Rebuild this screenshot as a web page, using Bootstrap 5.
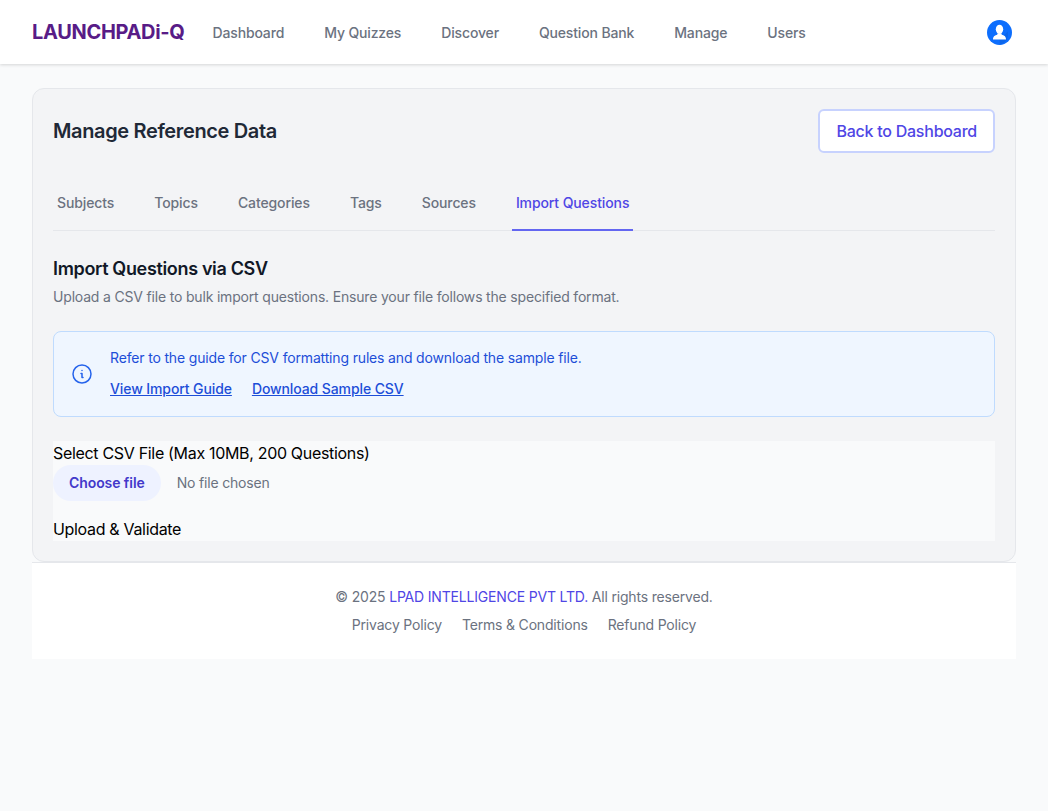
<!DOCTYPE html>
<html lang="en">
<head>
    <meta charset="UTF-8">
    <meta name="viewport" content="width=device-width, initial-scale=1.0">
    <title>Manage Reference Data</title>
    <link href="https://cdn.jsdelivr.net/npm/bootstrap@5.3.0/dist/css/bootstrap.min.css" rel="stylesheet">
    <style>
        body { font-family: Inter, "Liberation Sans", sans-serif; background: #f9fafb; color: #000; font-size: 16px; line-height: 24px; letter-spacing: -0.32px; }
        .top-bar { height: 64px; background: #fff; box-shadow: 0 1px 3px rgba(0,0,0,.15); padding: 0 32px; }
        .brand { font-size: 20px; font-weight: 700; color: #581c87; line-height: 28px; text-decoration: none; margin-right: 28px; letter-spacing: -0.33px; }
        .top-link { font-size: 14px; font-weight: 500; color: #6b7280; text-decoration: none; line-height: 20px; letter-spacing: -0.15px; }
        .top-links { gap: 40px; margin-top: 2px; }
        .page { padding: 24px 32px 0; }
        .panel { background: #f3f4f6; border: 1px solid #e5e7eb; border-radius: 12px; padding: 20px; height: 474px; }
        .panel-title { font-size: 20px; font-weight: 600; color: #1f2937; line-height: 28px; margin: 0; letter-spacing: -0.36px; }
        .back-btn { border: 2px solid #c7d2fe; border-radius: 6px; background: #fff; color: #4f46e5; font-size: 16px; font-weight: 500; line-height: 24px; padding: 8px 16px; text-decoration: none; height: 44px; letter-spacing: -0.24px; }
        .tabs { margin-top: 24px; border-bottom: 1px solid #e5e7eb; gap: 32px; height: 54px; }
        .tab-link { font-size: 14px; font-weight: 500; color: #6b7280; text-decoration: none; padding: 0 4px; line-height: 20px; display: flex; align-items: center; height: 54px; margin-bottom: -1px; border-bottom: 2px solid transparent; letter-spacing: -0.11px; }
        .tab-link.active { color: #4f46e5; border-bottom-color: #6366f1; }
        .import-title { font-size: 18px; font-weight: 600; color: #111827; line-height: 28px; margin: 24px 0 4px; letter-spacing: -0.34px; }
        .import-text { font-size: 14px; color: #6b7280; line-height: 20px; margin: 0 0 24px; letter-spacing: -0.18px; }
        .guide-box { background: #eff6ff; border: 1px solid #bfdbfe; border-radius: 8px; padding: 15px 18px 17px; height: 86px; gap: 18px; color: #1d4ed8; font-size: 14px; line-height: 20px; margin-bottom: 24px; letter-spacing: -0.16px; }
        .guide-box a { color: #1d4ed8; font-weight: 500; text-decoration: underline; letter-spacing: -0.1px; }
        .guide-links { gap: 20px; margin-top: 11px; }
        .guide-box svg { margin-top: 2px; }
        .upload-area { background: #f9fafb; height: 100px; }
        .file-row { margin-bottom: 16px; height: 36px; }
        .choose-btn { background: #eef2ff; color: #4338ca; border: 0; border-radius: 18px; font-size: 14px; font-weight: 600; height: 36px; padding: 0 16px; margin-right: 16px; letter-spacing: -0.08px; }
        .no-file { font-size: 14px; color: #6b7280; letter-spacing: -0.18px; }
        .page-footer { background: #fff; border-top: 1px solid #e5e7eb; height: 97px; padding-top: 24px; font-size: 14px; line-height: 20px; color: #6b7280; letter-spacing: -0.18px; }
        .page-footer a { color: #6b7280; text-decoration: none; }
        .page-footer a.lpad { color: #4f46e5; }
        .footer-links { gap: 20px; margin-top: 8px; }
    </style>
</head>
<body>
    <nav class="top-bar d-flex align-items-center justify-content-between">
        <div class="d-flex align-items-center">
            <a class="brand" href="#">LAUNCHPADi-Q</a>
            <div class="top-links d-flex">
                <a class="top-link" href="#">Dashboard</a>
                <a class="top-link" href="#">My Quizzes</a>
                <a class="top-link" href="#">Discover</a>
                <a class="top-link" href="#">Question Bank</a>
                <a class="top-link" href="#">Manage</a>
                <a class="top-link" href="#">Users</a>
            </div>
        </div>
        <svg class="me-1" width="25" height="25" viewBox="0 0 25 25" aria-label="Account">
            <circle cx="12.5" cy="12.5" r="12.5" fill="#0d6efd"/>
            <path d="M12.5 19 L21 11.5 A12 12 0 0 1 13 25 Z" fill="#0b5ed7" opacity=".5"/>
            <ellipse cx="12.5" cy="9.3" rx="3.7" ry="4.6" fill="#fff"/>
            <path d="M10.6 13.2 L14.4 13.2 L14.8 14.8 C17 15.5 19 16.2 19 19.4 L6 19.4 C6 16.2 8 15.5 10.2 14.8 Z" fill="#fff"/>
        </svg>
    </nav>

    <div class="page">
        <div class="panel">
            <div class="d-flex align-items-center justify-content-between">
                <h1 class="panel-title">Manage Reference Data</h1>
                <a class="back-btn" href="#">Back to Dashboard</a>
            </div>

            <div class="tabs d-flex">
                <a class="tab-link" href="#">Subjects</a>
                <a class="tab-link" href="#">Topics</a>
                <a class="tab-link" href="#">Categories</a>
                <a class="tab-link" href="#">Tags</a>
                <a class="tab-link" href="#">Sources</a>
                <a class="tab-link active" href="#">Import Questions</a>
            </div>

            <h2 class="import-title">Import Questions via CSV</h2>
            <p class="import-text">Upload a CSV file to bulk import questions. Ensure your file follows the specified format.</p>

            <div class="guide-box d-flex align-items-center">
                <svg width="20" height="20" viewBox="0 0 20 20" fill="none" stroke="#2563eb" stroke-width="1.5" stroke-linecap="round" stroke-linejoin="round">
                    <circle cx="10" cy="10" r="9"/>
                    <path d="M9 9.5 L10 9.5 L10 13.5 L11 13.5"/>
                    <path d="M10 6.5 L10 6.6"/>
                </svg>
                <div>
                    <div>Refer to the guide for CSV formatting rules and download the sample file.</div>
                    <div class="guide-links d-flex">
                        <a href="#">View Import Guide</a>
                        <a href="#">Download Sample CSV</a>
                    </div>
                </div>
            </div>

            <div class="upload-area">
                <div>Select CSV File (Max 10MB, 200 Questions)</div>
                <div class="file-row d-flex align-items-center">
                    <button class="choose-btn" type="button">Choose file</button>
                    <span class="no-file">No file chosen</span>
                </div>
                <div>Upload &amp; Validate</div>
            </div>
        </div>

        <footer class="page-footer text-center">
            <div>© 2025 <a class="lpad" href="#">LPAD INTELLIGENCE PVT LTD.</a> All rights reserved.</div>
            <div class="footer-links d-flex justify-content-center">
                <a href="#">Privacy Policy</a>
                <a href="#">Terms &amp; Conditions</a>
                <a href="#">Refund Policy</a>
            </div>
        </footer>
    </div>
    <script src="https://cdn.jsdelivr.net/npm/bootstrap@5.3.0/dist/js/bootstrap.bundle.min.js"></script>
</body>
</html>
